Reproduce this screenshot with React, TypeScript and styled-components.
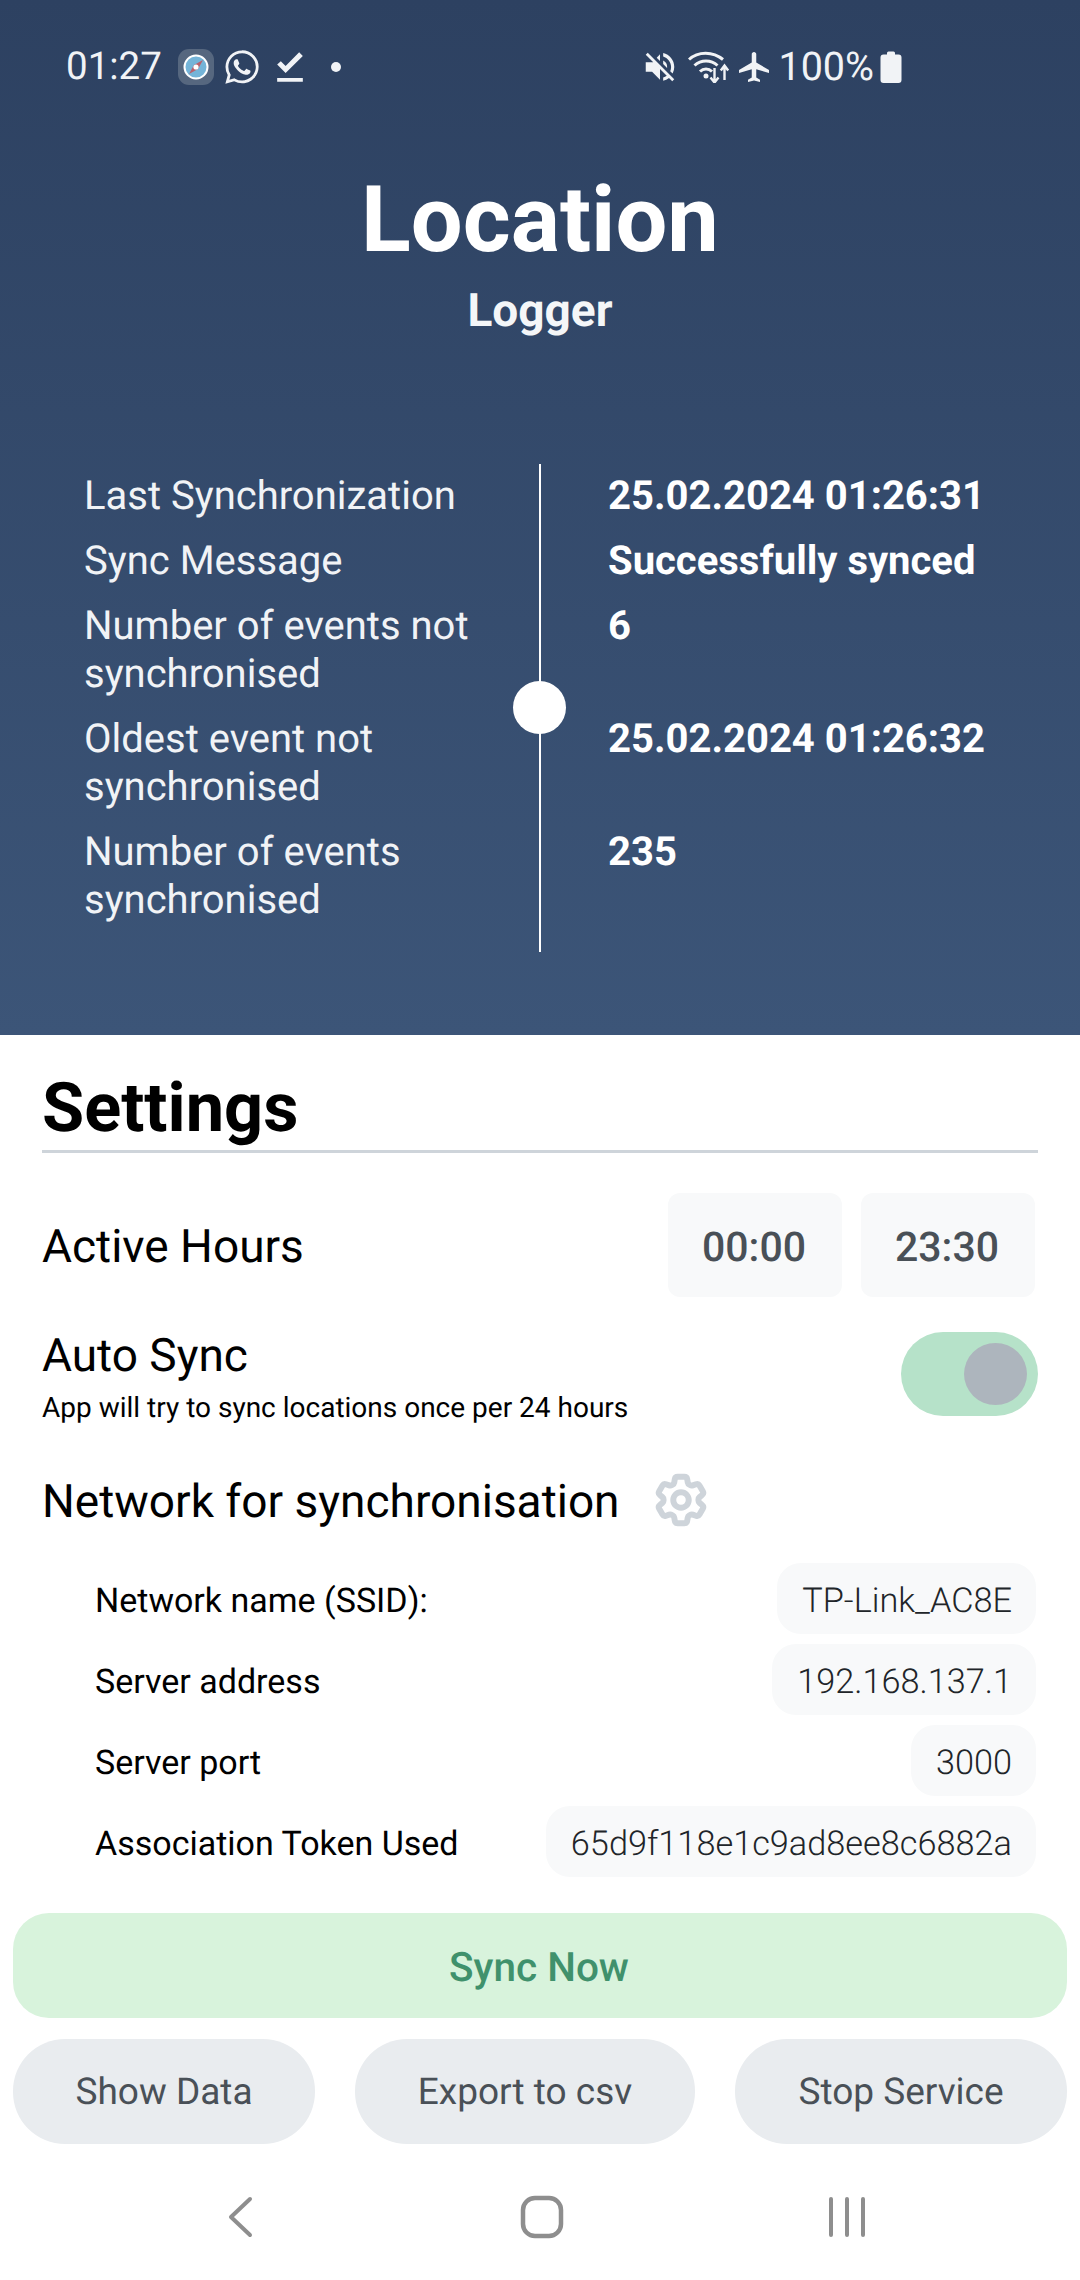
import React from "react";
import styled, { createGlobalStyle } from "styled-components";
import { HiOutlineCog6Tooth } from "react-icons/hi2";
import { IoLogoWhatsapp } from "react-icons/io5";
import { MdAirplanemodeActive, MdFileDownloadDone, MdVolumeOff } from "react-icons/md";

const GlobalStyle = createGlobalStyle`
  html, body {
    margin: 0;
    padding: 0;
    background: #fff;
    font-family: Roboto, "Noto Sans", sans-serif;
    text-rendering: geometricPrecision;
  }
  * {
    box-sizing: border-box;
  }
`;

const syncRows = [
  { label: "Last Synchronization", value: "25.02.2024 01:26:31" },
  { label: "Sync Message", value: "Successfully synced" },
  { label: "Number of events not synchronised", value: "6" },
  { label: "Oldest event not synchronised", value: "25.02.2024 01:26:32" },
  { label: "Number of events synchronised", value: "235" },
];

const networkRows = [
  { label: "Network name (SSID):", value: "TP-Link_AC8E" },
  { label: "Server address", value: "192.168.137.1" },
  { label: "Server port", value: "3000" },
  { label: "Association Token Used", value: "65d9f118e1c9ad8ee8c6882a" },
];

const CompassIcon = () => (
  <svg width="36" height="36" viewBox="0 0 36 36">
    <rect width="36" height="36" rx="11" fill="#56677f" />
    <circle cx="18" cy="18" r="11.5" fill="#74b4d8" stroke="#fff" strokeWidth="2" />
    <path d="M25 11l-9 5 4 4z" fill="#b9606c" />
    <path d="M11 25l9-5-4-4z" fill="#b9606c" />
    <circle cx="18" cy="18" r="2.6" fill="#fff" />
  </svg>
);

const WifiIcon = () => (
  <svg width="42" height="32" viewBox="0 0 42 32" fill="none" stroke="#f1f3f6">
    <path d="M1 8.500C10 0 25 0 35 8.500" strokeWidth="3" />
    <path d="M6.500 14.500C13 8.500 23 8.500 29.500 14.500" strokeWidth="3" />
    <path d="M12 20.500C15.500 17 20.500 17 24 20.500" strokeWidth="3" />
    <circle cx="18" cy="25" r="2.500" fill="#f1f3f6" stroke="none" />
    <path d="M26.500 17v14M22.500 26.500l4 5 4-5" strokeWidth="2.400" />
    <path d="M36.500 29V15M32.800 19.500l3.700-5 3.700 5" strokeWidth="2.400" />
  </svg>
);

const BatteryIcon = () => (
  <svg width="22" height="32" viewBox="0 0 22 32">
    <path
      d="M7 2a1.500 1.500 0 0 1 1.500-1.500h5A1.500 1.500 0 0 1 15 2v1.500h3.500a3 3 0 0 1 3 3V29a3 3 0 0 1-3 3h-15a3 3 0 0 1-3-3V6.500a3 3 0 0 1 3-3H7z"
      fill="#f1f3f6"
    />
  </svg>
);

const App: React.FC = () => {
  return (
    <Screen>
      <GlobalStyle />
      <Header>
        <StatusBar>
          <StatusGroup>
            <StatusText $size={38.5}>01:27</StatusText>
            <CompassSlot>
              <CompassIcon />
            </CompassSlot>
            <WhatsappSlot>
              <IoLogoWhatsapp size={38} />
            </WhatsappSlot>
            <CheckSlot>
              <MdFileDownloadDone size={44} />
            </CheckSlot>
            <StatusDot />
          </StatusGroup>
          <StatusGroup>
            <MdVolumeOff size={38} />
            <WifiSlot>
              <WifiIcon />
            </WifiSlot>
            <MdAirplanemodeActive size={36} />
            <StatusText $size={39.5}>100%</StatusText>
            <BatteryIcon />
          </StatusGroup>
        </StatusBar>

        <Title>Location</Title>
        <Subtitle>Logger</Subtitle>

        <SyncTable>
          <Timeline>
            <TimelineDot />
          </Timeline>
          {syncRows.map((row) => (
            <SyncRow key={row.label}>
              <SyncLabel>{row.label}</SyncLabel>
              <SyncValue>{row.value}</SyncValue>
            </SyncRow>
          ))}
        </SyncTable>
      </Header>

      <Settings>
        <SettingsTitle>Settings</SettingsTitle>

        <ActiveHours>
          <RowTitle>Active Hours</RowTitle>
          <TimeGroup>
            <TimeBox>00:00</TimeBox>
            <TimeBox>23:30</TimeBox>
          </TimeGroup>
        </ActiveHours>

        <AutoSync>
          <div>
            <RowTitle>Auto Sync</RowTitle>
            <RowHint>App will try to sync locations once per 24 hours</RowHint>
          </div>
          <Toggle>
            <ToggleKnob />
          </Toggle>
        </AutoSync>

        <NetworkHeading>
          <RowTitle>Network for synchronisation</RowTitle>
          <HiOutlineCog6Tooth size={62} color="#ced4da" strokeWidth={2.3} />
        </NetworkHeading>

        <NetworkList>
          {networkRows.map((row) => (
            <NetworkRow key={row.label}>
              <NetworkLabel>{row.label}</NetworkLabel>
              <NetworkValue>{row.value}</NetworkValue>
            </NetworkRow>
          ))}
        </NetworkList>
      </Settings>

      <Actions>
        <SyncButton>Sync Now</SyncButton>
        <ActionRow>
          <ActionButton $width={302}>Show Data</ActionButton>
          <ActionButton $width={340}>Export to csv</ActionButton>
          <ActionButton $width={332}>Stop Service</ActionButton>
        </ActionRow>
      </Actions>

      <NavBar>
        <svg width="30" height="42" viewBox="0 0 30 42" fill="none" stroke="#8e8e8e" strokeWidth="4" strokeLinecap="round" strokeLinejoin="round">
          <path d="M25 3L6 21l19 18" />
        </svg>
        <svg width="44" height="44" viewBox="0 0 44 44" fill="none" stroke="#8e8e8e" strokeWidth="4.500">
          <rect x="3" y="3" width="38" height="38" rx="12" />
        </svg>
        <svg width="38" height="40" viewBox="0 0 38 40" fill="none" stroke="#8e8e8e" strokeWidth="4" strokeLinecap="round">
          <path d="M3 2v36M19 2v36M35 2v36" />
        </svg>
      </NavBar>
    </Screen>
  );
};

export default App;

const Screen = styled.div`
  width: 1080px;
  height: 2280px;
  background: #ffffff;
  display: flex;
  flex-direction: column;
  overflow: hidden;
`;

const Header = styled.header`
  height: 1035px;
  padding-top: 44px;
  background: linear-gradient(180deg, #2d4161 0%, #3c5578 100%);
  color: #ffffff;
  display: flex;
  flex-direction: column;
  align-items: center;
`;

const StatusBar = styled.div`
  width: 100%;
  height: 46px;
  padding: 0 178px 0 66px;
  display: flex;
  justify-content: space-between;
  align-items: center;
  color: #f1f3f6;
`;

const StatusGroup = styled.div`
  display: flex;
  align-items: center;
  gap: 6px;
`;

const StatusText = styled.span<{ $size: number }>`
  font-size: ${(props) => props.$size}px;
  font-weight: 400;
  line-height: 46px;
`;

const CompassSlot = styled.span`
  display: flex;
  margin-left: 10px;
`;

const WhatsappSlot = styled.span`
  display: flex;
  margin-left: 3px;
`;

const CheckSlot = styled.span`
  display: flex;
  margin-left: 1px;
`;

const WifiSlot = styled.span`
  display: flex;
  margin-left: 3px;
`;

const StatusDot = styled.span`
  width: 10px;
  height: 10px;
  margin-left: 13px;
  border-radius: 50%;
  background: #f1f3f6;
`;

const Title = styled.h1`
  margin: 79px 0 0;
  font-size: 92px;
  font-weight: 700;
  line-height: 104px;
`;

const Subtitle = styled.h2`
  margin: 13px 0 0;
  font-size: 46px;
  font-weight: 700;
  line-height: 50px;
  color: #f4f6f8;
`;

const SyncTable = styled.div`
  position: relative;
  width: 100%;
  margin-top: 136px;
  padding: 0 60px 0 84px;
  display: flex;
  flex-direction: column;
  gap: 17px;
`;

const Timeline = styled.div`
  position: absolute;
  left: 539px;
  top: -8px;
  bottom: -28px;
  width: 2px;
  background: #ffffff;
`;

const TimelineDot = styled.div`
  position: absolute;
  left: -26px;
  top: 217px;
  width: 53px;
  height: 53px;
  border-radius: 50%;
  background: #ffffff;
`;

const SyncRow = styled.div`
  display: flex;
  font-size: 40px;
  line-height: 48px;
`;

const SyncLabel = styled.div`
  width: 524px;
  padding-right: 110px;
  color: #f1f3f6;
`;

const SyncValue = styled.div`
  font-weight: 700;
  white-space: nowrap;
`;

const Settings = styled.section`
  padding: 31px 42px 0;
  flex: 1;
`;

const SettingsTitle = styled.h2`
  margin: 0;
  padding-bottom: 1px;
  border-bottom: 3px solid #ced4da;
  font-size: 68.5px;
  font-weight: 700;
  line-height: 83px;
  color: #000000;
`;

const ActiveHours = styled.div`
  margin-top: 40px;
  display: flex;
  justify-content: space-between;
  align-items: center;
`;

const RowTitle = styled.div`
  position: relative;
  top: 2px;
  font-size: 46px;
  line-height: 56px;
  color: #000000;
`;

const RowHint = styled.div`
  margin-top: 8px;
  font-size: 28px;
  line-height: 36px;
  color: #000000;
`;

const TimeGroup = styled.div`
  display: flex;
  gap: 19px;
  margin-right: 3px;
`;

const TimeBox = styled.div`
  width: 174px;
  height: 104px;
  padding-top: 6px;
  padding-right: 2px;
  border-radius: 12px;
  background: #f8f9fa;
  display: flex;
  align-items: center;
  justify-content: center;
  font-size: 41px;
  font-weight: 500;
  color: #495057;
`;

const AutoSync = styled.div`
  margin-top: 29px;
  display: flex;
  justify-content: space-between;
  align-items: flex-start;
`;

const Toggle = styled.div`
  width: 137px;
  height: 84px;
  margin-top: 6px;
  padding: 11px;
  border-radius: 42px;
  background: #b6e2c9;
  display: flex;
  justify-content: flex-end;
`;

const ToggleKnob = styled.div`
  width: 63px;
  height: 62px;
  border-radius: 50%;
  background: #adb5bd;
`;

const NetworkHeading = styled.div`
  margin-top: 43px;
  display: flex;
  align-items: center;
  gap: 30px;
`;

const NetworkList = styled.div`
  margin-top: 32px;
  padding: 0 2px 0 53px;
  display: flex;
  flex-direction: column;
  gap: 10px;
`;

const NetworkRow = styled.div`
  height: 71px;
  display: flex;
  justify-content: space-between;
  align-items: center;
`;

const NetworkLabel = styled.div`
  padding-top: 4px;
  font-size: 34px;
  color: #000000;
`;

const NetworkValue = styled.div`
  height: 71px;
  padding: 4px 24px 0 25px;
  border-radius: 24px;
  background: #f8f9fa;
  display: flex;
  align-items: center;
  font-size: 34.3px;
  font-weight: 300;
  color: #212529;
`;

const Actions = styled.div`
  padding: 0 13px;
  display: flex;
  flex-direction: column;
  gap: 21px;
`;

const SyncButton = styled.div`
  height: 105px;
  padding: 2px 2px 0 0;
  border-radius: 36px;
  background: #d8f3dc;
  display: flex;
  align-items: center;
  justify-content: center;
  font-size: 40.5px;
  font-weight: 500;
  color: #40916c;
`;

const ActionRow = styled.div`
  display: flex;
  justify-content: space-between;
`;

const ActionButton = styled.div<{ $width: number }>`
  width: ${(props) => props.$width}px;
  height: 105px;
  padding-top: 2px;
  border-radius: 52px;
  background: #e9ecef;
  display: flex;
  align-items: center;
  justify-content: center;
  font-size: 37px;
  color: #495057;
`;

const NavBar = styled.nav`
  height: 136px;
  padding: 10px 214px 0 225px;
  display: flex;
  justify-content: space-between;
  align-items: center;
`;
